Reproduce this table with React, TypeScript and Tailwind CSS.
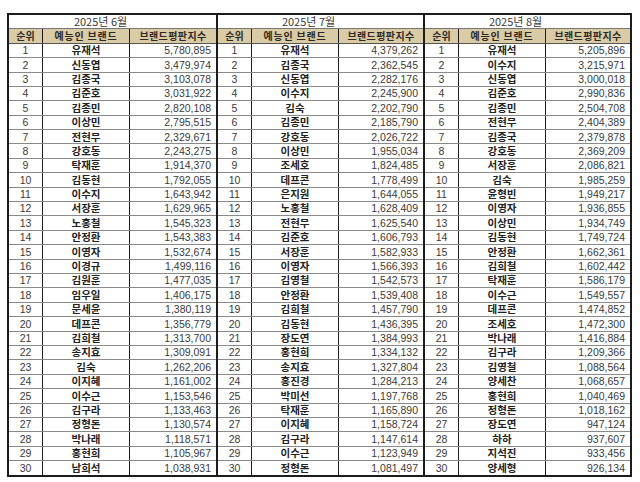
type Row = [string, string];

const june: Row[] = [
  ['유재석', '5,780,895'], ['신동엽', '3,479,974'], ['김종국', '3,103,078'], ['김준호', '3,031,922'],
  ['김종민', '2,820,108'], ['이상민', '2,795,515'], ['전현무', '2,329,671'], ['강호동', '2,243,275'],
  ['탁재훈', '1,914,370'], ['김동현', '1,792,055'], ['이수지', '1,643,942'], ['서장훈', '1,629,965'],
  ['노홍철', '1,545,323'], ['안정환', '1,543,383'], ['이영자', '1,532,674'], ['이경규', '1,499,116'],
  ['김원훈', '1,477,035'], ['임우일', '1,406,175'], ['문세윤', '1,380,119'], ['데프콘', '1,356,779'],
  ['김희철', '1,313,700'], ['송지효', '1,309,091'], ['김숙', '1,262,206'], ['이지혜', '1,161,002'],
  ['이수근', '1,153,546'], ['김구라', '1,133,463'], ['정형돈', '1,130,574'], ['박나래', '1,118,571'],
  ['홍현희', '1,105,967'], ['남희석', '1,038,931'],
];

const july: Row[] = [
  ['유재석', '4,379,262'], ['김종국', '2,362,545'], ['신동엽', '2,282,176'], ['이수지', '2,245,900'],
  ['김숙', '2,202,790'], ['김종민', '2,185,790'], ['강호동', '2,026,722'], ['이상민', '1,955,034'],
  ['조세호', '1,824,485'], ['데프콘', '1,778,499'], ['은지원', '1,644,055'], ['노홍철', '1,628,409'],
  ['전현무', '1,625,540'], ['김준호', '1,606,793'], ['서장훈', '1,582,933'], ['이영자', '1,566,393'],
  ['김영철', '1,542,573'], ['안정환', '1,539,408'], ['김희철', '1,457,790'], ['김동현', '1,436,395'],
  ['장도연', '1,384,993'], ['홍현희', '1,334,132'], ['송지효', '1,327,804'], ['홍진경', '1,284,213'],
  ['박미선', '1,197,768'], ['탁재훈', '1,165,890'], ['이지혜', '1,158,724'], ['김구라', '1,147,614'],
  ['이수근', '1,123,949'], ['정형돈', '1,081,497'],
];

const august: Row[] = [
  ['유재석', '5,205,896'], ['이수지', '3,215,971'], ['신동엽', '3,000,018'], ['김준호', '2,990,836'],
  ['김종민', '2,504,708'], ['전현무', '2,404,389'], ['김종국', '2,379,878'], ['강호동', '2,369,209'],
  ['서장훈', '2,086,821'], ['김숙', '1,985,259'], ['윤형빈', '1,949,217'], ['이영자', '1,936,855'],
  ['이상민', '1,934,749'], ['김동현', '1,749,724'], ['안정환', '1,662,361'], ['김희철', '1,602,442'],
  ['탁재훈', '1,586,179'], ['이수근', '1,549,557'], ['데프콘', '1,474,852'], ['조세호', '1,472,300'],
  ['박나래', '1,416,884'], ['김구라', '1,209,366'], ['김영철', '1,088,564'], ['양세찬', '1,068,657'],
  ['홍현희', '1,040,469'], ['정형돈', '1,018,162'], ['장도연', '947,124'], ['하하', '937,607'],
  ['지석진', '933,456'], ['양세형', '926,134'],
];

const months = [
  { title: '2025년 6월', rows: june },
  { title: '2025년 7월', rows: july },
  { title: '2025년 8월', rows: august },
];

const numFont = { fontFamily: '"Liberation Sans", Arial, sans-serif' };

function MonthTable({ title, rows, first }: { title: string; rows: Row[]; first: boolean }) {
  return (
    <div className={`w-[207px] flex flex-col ${first ? '' : 'border-l-2 border-[#1c1c1c]'}`}>
      {/* 월 제목 */}
      <div className="h-[14.5px] border-b border-[#777] flex items-center justify-center pr-[24px] text-[11px] leading-none text-[#3a3a3a]">
        {title}
      </div>
      {/* 컬럼 헤더 */}
      <div className="h-[14.5px] flex bg-[#d9cba6] border-b border-[#555] text-[10px] leading-none font-bold text-[#2e2a22]">
        <div className="w-[34px] border-r border-[#1c1c1c] flex items-center justify-center">순위</div>
        <div className="w-[87px] border-r border-[#1c1c1c] flex items-center justify-center tracking-[0.8px]">예능인 브랜드</div>
        <div className="flex-1 flex items-center justify-center tracking-[0.4px]">브랜드평판지수</div>
      </div>
      {rows.map(([name, score], i) => (
        <div
          key={i}
          className={`h-[14.4px] flex leading-none ${i < rows.length - 1 ? 'border-b border-[#8a8a8a]' : ''}`}
        >
          <div className="w-[34px] border-r border-[#1c1c1c] flex items-center justify-center text-[10.5px] text-[#3a3a3a]" style={numFont}>
            {i + 1}
          </div>
          <div className="w-[87px] border-r border-[#1c1c1c] flex items-center justify-center text-[10.5px] font-bold text-[#222]">
            {name}
          </div>
          <div className="flex-1 flex items-center justify-end pr-[5px] text-[10.5px] text-[#3a3a3a]" style={numFont}>
            {score}
          </div>
        </div>
      ))}
    </div>
  );
}

export default function App() {
  return (
    <div
      className="w-[640px] h-[482px] bg-white pt-[7px] pl-[7px]"
      style={{ fontFamily: '"Noto Sans CJK KR", "Noto Sans", sans-serif' }}
    >
      <div className="inline-flex border-2 border-[#1c1c1c]">
        {months.map((m, i) => (
          <MonthTable key={m.title} title={m.title} rows={m.rows} first={i === 0} />
        ))}
      </div>
    </div>
  );
}
